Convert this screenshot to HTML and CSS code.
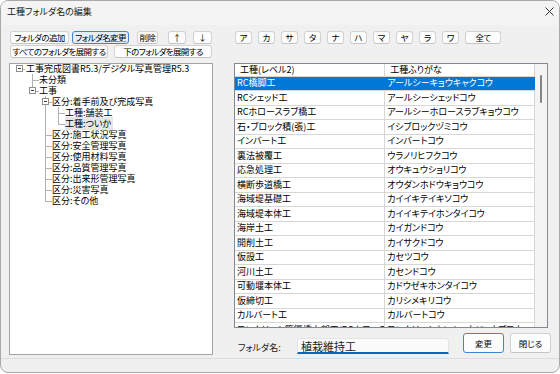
FILE: index.html
```html
<!doctype html>
<html lang="ja">
  <head>
    <meta charset="UTF-8" />
    <meta name="viewport" content="width=device-width, initial-scale=1.0" />
    <title>工種フォルダ名の編集</title>
    <link rel="stylesheet" href="styles.css">
  </head>
  <body>
    <div class="window">
      <div class="titlebar">
        <span class="title">工種フォルダ名の編集</span>
        <svg class="close" width="9" height="9" viewBox="0 0 9 9">
          <path d="M0.5 0.5L8.5 8.5M8.5 0.5L0.5 8.5" stroke="#333" stroke-width="1" fill="none" />
        </svg>
      </div>

      <div class="main">
        <div class="left">
          <div class="toolbar">
            <button class="btn btn-add">フォルダの追加</button>
            <button class="btn btn-rename is-focused">フォルダ名変更</button>
            <button class="btn btn-del">削除</button>
            <button class="btn btn-up">↑</button>
            <button class="btn btn-down">↓</button>
          </div>
          <div class="toolbar toolbar-second">
            <button class="btn btn-expand">すべてのフォルダを展開する</button>
            <button class="btn btn-expand">下のフォルダを展開する</button>
          </div>

          <div class="tree-box">
            <ul class="tree">
              <li><span class="exp"></span>工事完成図書R5.3/デジタル写真管理R5.3
                <ul>
                  <li>未分類</li>
                  <li><span class="exp"></span>工事
                    <ul>
                      <li><span class="exp"></span>区分:着手前及び完成写真
                        <ul>
                          <li>工種:舗装工</li>
                          <li><span class="selected">工種:ついか</span></li>
                        </ul>
                      </li>
                      <li>区分:施工状況写真</li>
                      <li>区分:安全管理写真</li>
                      <li>区分:使用材料写真</li>
                      <li>区分:品質管理写真</li>
                      <li>区分:出来形管理写真</li>
                      <li>区分:災害写真</li>
                      <li>区分:その他</li>
                    </ul>
                  </li>
                </ul>
              </li>
            </ul>
          </div>
        </div>

        <div class="right">
          <div class="toolbar kana-row">
            <button class="btn btn-kana">ア</button>
            <button class="btn btn-kana">カ</button>
            <button class="btn btn-kana">サ</button>
            <button class="btn btn-kana">タ</button>
            <button class="btn btn-kana">ナ</button>
            <button class="btn btn-kana">ハ</button>
            <button class="btn btn-kana">マ</button>
            <button class="btn btn-kana">ヤ</button>
            <button class="btn btn-kana">ラ</button>
            <button class="btn btn-kana">ワ</button>
            <button class="btn btn-all">全て</button>
          </div>

          <div class="grid">
            <div class="grid-body">
              <table>
                <thead>
                  <tr><th>工種(レベル2)</th><th>工種ふりがな</th></tr>
                </thead>
                <tbody>
                  <tr class="row-selected"><td>RC橋脚工</td><td>アールシーキョウキャクコウ</td></tr>
                  <tr><td>RCシェッド工</td><td>アールシーシェッドコウ</td></tr>
                  <tr><td>RCホロースラブ橋工</td><td>アールシーホロースラブキョウコウ</td></tr>
                  <tr><td>石・ブロック積(張)工</td><td>イシブロックヅミコウ</td></tr>
                  <tr><td>インバート工</td><td>インバートコウ</td></tr>
                  <tr><td>裏法被覆工</td><td>ウラノリヒフクコウ</td></tr>
                  <tr><td>応急処理工</td><td>オウキュウショリコウ</td></tr>
                  <tr><td>横断歩道橋工</td><td>オウダンホドウキョウコウ</td></tr>
                  <tr><td>海域堤基礎工</td><td>カイイキテイキソコウ</td></tr>
                  <tr><td>海域堤本体工</td><td>カイイキテイホンタイコウ</td></tr>
                  <tr><td>海岸土工</td><td>カイガンドコウ</td></tr>
                  <tr><td>開削土工</td><td>カイサクドコウ</td></tr>
                  <tr><td>仮設工</td><td>カセツコウ</td></tr>
                  <tr><td>河川土工</td><td>カセンドコウ</td></tr>
                  <tr><td>可動堰本体工</td><td>カドウゼキホンタイコウ</td></tr>
                  <tr><td>仮締切工</td><td>カリシメキリコウ</td></tr>
                  <tr><td>カルバート工</td><td>カルバートコウ</td></tr>
                  <tr><td>コンクリート管渠橋上部工(PCホロースラブ桁)</td><td>コンクリートカンキョウジョウブコウ</td></tr>
                </tbody>
              </table>
            </div>
            <div class="vscroll"><div class="thumb"></div></div>
          </div>

          <div class="name-row">
            <label class="name-label" for="folderName">フォルダ名:</label>
            <input class="name-input" id="folderName" type="text" value="植栽維持工">
            <button class="btn btn-dialog btn-default">変更</button>
            <button class="btn btn-dialog btn-close">閉じる</button>
          </div>
        </div>
      </div>

      <div class="statusline"></div>
    </div>
  </body>
</html>
```

FILE: styles.css
```css
* {
  box-sizing: border-box;
}

html,
body {
  margin: 0;
  background: #ffffff;
}

body {
  font-family: "Noto Sans CJK JP", "Noto Sans", sans-serif;
  font-size: 9px;
  line-height: 11px;
  color: #000;
  font-feature-settings: "palt";
}

.window {
  width: 560px;
  height: 373px;
  border: 1px solid #a9a9a9;
  border-radius: 8px;
  background: #f0f0f0;
  overflow: hidden;
  display: flex;
  flex-direction: column;
}

/* title bar */
.titlebar {
  height: 24px;
  flex: none;
  display: flex;
  align-items: flex-start;
  padding: 5px 0 0 6px;
  background: #f4f4f4;
}

.title {
  color: #1a1a1a;
}

.close {
  margin: 1px 5px 0 auto;
}

/* main area */
.main {
  display: flex;
  padding: 6px 0 0 8px;
}

.left {
  width: 204px;
  flex: none;
}

.right {
  width: 318px;
  margin-left: 21px;
  flex: none;
}

/* buttons */
.toolbar {
  display: flex;
  height: 13px;
  padding-left: 1px;
}

.toolbar-second {
  margin-top: 1px;
  gap: 6px;
}

.btn {
  height: 13px;
  padding: 0;
  font-family: inherit;
  font-size: 8.5px;
  line-height: 11px;
  letter-spacing: -0.6px;
  color: #000;
  background: #fdfdfd;
  border: 1px solid #d2d2d2;
  border-bottom-color: #c4c4c4;
  border-radius: 3px;
  white-space: nowrap;
  font-feature-settings: "palt";
}

.btn.is-focused {
  background: #e3eef9;
  border-color: #3d87d0;
}

.btn-add { width: 59px; }
.btn-rename { width: 57px; margin-left: 3px; }
.btn-del { width: 21px; margin-left: 8px; }
.btn-up { width: 18px; margin-left: 10px; letter-spacing: 0; }
.btn-down { width: 19px; margin-left: 7px; letter-spacing: 0; }
.btn-expand { width: 98px; }

.kana-row {
  gap: 6px;
}

.btn-kana { width: 17px; letter-spacing: 0; }
.btn-all { width: 36px; }

/* tree */
.tree-box {
  margin-top: 5px;
  height: 292px;
  background: #fff;
  border: 1px solid #a3a3ab;
  padding: 0 0 0 9px;
  overflow: hidden;
}

.tree,
.tree ul {
  list-style: none;
  margin: 0;
  padding: 0;
}

.tree {
  margin-top: -1px;
}

.tree ul {
  padding-left: 6px;
}

.tree li {
  position: relative;
  padding-left: 7px;
  line-height: 11px;
  white-space: nowrap;
}

.tree li::before {
  content: "";
  position: absolute;
  left: 0;
  top: 0;
  width: 6px;
  height: 6px;
  border-left: 1px solid #b2b2b2;
  border-bottom: 1px solid #b2b2b2;
}

.tree li:not(:last-child)::after {
  content: "";
  position: absolute;
  left: 0;
  top: 0;
  bottom: 0;
  border-left: 1px solid #b2b2b2;
}

.tree > li::before {
  border-left: none;
}

.exp {
  position: absolute;
  left: -3px;
  top: 2px;
  width: 7px;
  height: 7px;
  background: #fff;
  border: 1px solid #8e8e8e;
  z-index: 1;
}

.exp::after {
  content: "";
  position: absolute;
  left: 1px;
  top: 2px;
  width: 3px;
  height: 1px;
  background: #3a3a3a;
}

.selected {
  background: #e6e6e6;
  padding-right: 2px;
}

/* grid */
.grid {
  margin-top: 19px;
  margin-right: 4px;
  height: 265px;
  display: flex;
  background: #fff;
  border: 1px solid #828790;
}

.grid-body {
  width: 300px;
  flex: none;
  overflow: hidden;
}

.grid table {
  width: 300px;
  table-layout: fixed;
  border-collapse: collapse;
}

.grid th,
.grid td {
  overflow: hidden;
  white-space: nowrap;
  text-align: left;
  font-weight: normal;
  padding: 0 0 0 2px;
  border-right: 1px solid #d6d6d6;
}

.grid th {
  height: 12px;
  padding-left: 5px;
  border-bottom: 1px solid #d6d6d6;
  line-height: 11px;
}

.grid td {
  height: 14.5px;
  border-bottom: 1px solid #d6d6d6;
  line-height: 12px;
}

.row-selected td {
  background: #0078d7;
  color: #fff;
  border-right-color: #0078d7;
}

.vscroll {
  flex: 1;
  background: #f3f3f3;
  position: relative;
}

.thumb {
  position: absolute;
  left: 5px;
  top: 11px;
  width: 2px;
  height: 28px;
  border-radius: 1px;
  background: #858585;
}

/* name row */
.name-row {
  margin-top: 5px;
  display: flex;
  align-items: flex-start;
  height: 21px;
}

.name-label {
  width: 63px;
  margin-top: 9px;
  padding-left: 4px;
  color: #1a1a1a;
}

.name-input {
  width: 152px;
  height: 16px;
  margin-top: 5px;
  padding: 0 3px;
  font-family: inherit;
  font-size: 11px;
  color: #1a1a1a;
  background: #fbfbfb;
  border: 1px solid #e4e4e4;
  border-bottom: 2px solid #0067c0;
  border-radius: 3px 3px 0 0;
  outline: none;
}

.btn-dialog {
  width: 41px;
  height: 20px;
  letter-spacing: 0;
}

.btn-default {
  margin-left: 14px;
  border-color: #3d87d0;
}

.btn-close {
  margin-left: 6px;
}

.statusline {
  margin-top: 3px;
  border-top: 1px solid #dcdcdc;
  flex: 1;
}
```
